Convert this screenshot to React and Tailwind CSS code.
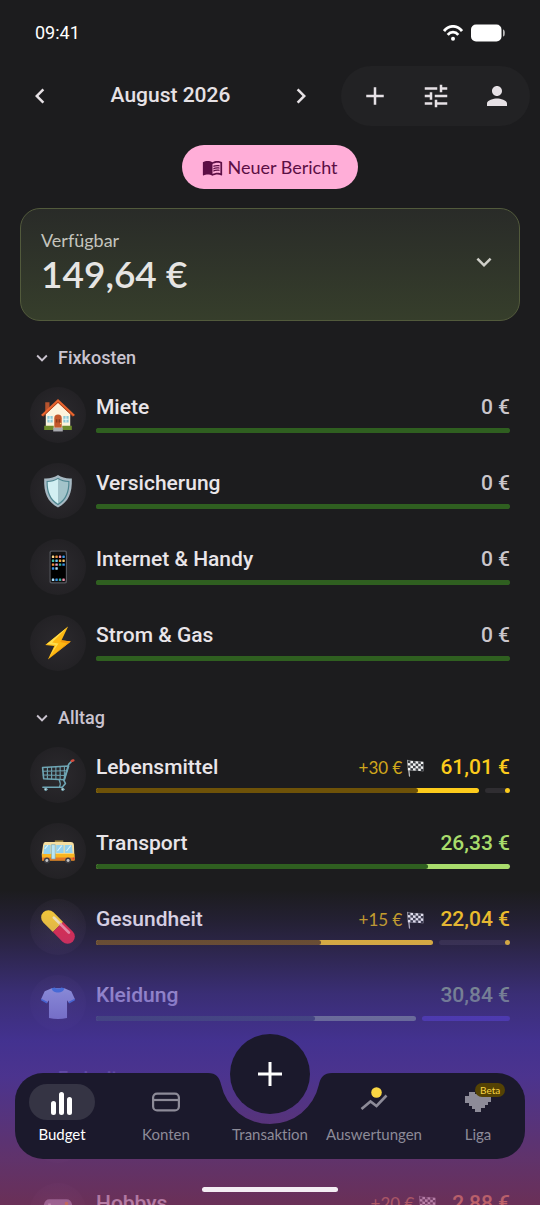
import React, { useState } from "react";
import {
  MdAdd,
  MdChevronLeft,
  MdChevronRight,
  MdExpandMore,
  MdMenuBook,
  MdPerson,
  MdTune,
} from "react-icons/md";

const groups = [
  {
    name: "Fixkosten",
    items: [
      { id: "miete", name: "Miete", icon: "house", amount: "0 €", tone: "empty", filled: 100, spent: 100 },
      { id: "versicherung", name: "Versicherung", icon: "shield", amount: "0 €", tone: "empty", filled: 100, spent: 100 },
      { id: "internet", name: "Internet & Handy", icon: "phone", amount: "0 €", tone: "empty", filled: 100, spent: 100 },
      { id: "strom", name: "Strom & Gas", icon: "bolt", amount: "0 €", tone: "empty", filled: 100, spent: 100 },
    ],
  },
  {
    name: "Alltag",
    items: [
      { id: "lebensmittel", name: "Lebensmittel", icon: "cart", amount: "61,01 €", goal: "+30 €", tone: "yellow", filled: 92.5, spent: 77.8 },
      { id: "transport", name: "Transport", icon: "bus", amount: "26,33 €", tone: "green", filled: 100, spent: 80.3 },
      { id: "gesundheit", name: "Gesundheit", icon: "pill", amount: "22,04 €", goal: "+15 €", tone: "yellow", filled: 81.5, spent: 54.3 },
      { id: "kleidung", name: "Kleidung", icon: "shirt", amount: "30,84 €", tone: "saving", filled: 77.4, spent: 53 },
    ],
  },
  {
    name: "Freizeit",
    items: [
      { id: "leer", name: "", amount: "", tone: "empty", filled: 100, spent: 100 },
      { id: "hobbys", name: "Hobbys", icon: "gamepad", amount: "2,88 €", goal: "+20 €", tone: "orange", filled: 60, spent: 50 },
    ],
  },
];

const tones = {
  empty: { text: "text-[#cac6cb]", spent: "bg-[#2f5f20]", left: "bg-[#2f5f20]", rest: "bg-[#2f2d31]" },
  green: { text: "text-[#a9dc6c]", spent: "bg-[#2f5f20]", left: "bg-[#a9dc6c]", rest: "bg-[#2f2d31]" },
  saving: { text: "text-[#a9dc6c]", spent: "bg-[#2f5f20]", left: "bg-[#a9dc6c]", rest: "bg-[#4b3eaf]" },
  yellow: { text: "text-[#fccb1c]", spent: "bg-[#6e5208]", left: "bg-[#fccb1c]", rest: "bg-[#2f2d31]", dot: true },
  orange: { text: "text-[#fca04c]", spent: "bg-[#6e3a08]", left: "bg-[#fca04c]", rest: "bg-[#2f2d31]", dot: true },
};

const emojis = {
  house: (
    <>
      <path d="M4 4h4v9H4z" fill="#b5532e" />
      <path d="M4.500 15 16 4l11.500 11v14h-23z" fill="#fdf3dc" />
      <path d="M16 1 0 16l2 1.500L16 4.500l14 13 2-1.500z" fill="#e9652f" />
      <path d="m16 4.500-14 13v-.8L16 3.500l14 13.200v.8z" fill="#a63e17" />
      <path d="M6 17h5v6H6zM21 17h5v6h-5z" fill="#8fc9d4" />
      <path d="M8.500 17v6M6 20h5M23.500 17v6M21 20h5" stroke="#f3fbfb" strokeWidth="0.8" />
      <path d="M12.500 28V19a3.500 3.500 0 0 1 7 0v9z" fill="#c4572b" />
      <path d="M14 20h1.500v3H14zM16.500 20H18v3h-1.500z" fill="#8c3a1c" />
      <circle cx="18.500" cy="24" r="0.7" fill="#ffd35c" />
      <path d="M3 26h9v4H3zM20 26h9v4h-9z" fill="#6d8b2c" />
      <path d="M11.500 28h9v3.500h-9z" fill="#a9aab0" />
    </>
  ),
  shield: (
    <>
      <path d="M16 1c3.500 2.500 8 3.500 13 3.200C29.500 18 26 26 16 31.500 6 26 2.500 18 3 4.200 8 4.500 12.500 3.500 16 1z" fill="#a7b9c3" />
      <path d="M16 3.500c3 2 6.800 3 10.800 3C27 17.500 24 24.500 16 29.300 8 24.500 5 17.500 5.200 6.500c4 0 7.800-1 10.800-3z" fill="#4f8791" />
      <path d="M16 4.800c3 1.900 6 2.700 9.700 2.800C25.700 17 23 23.600 16 28z" fill="#a3c4ca" />
      <path d="M16 4.800c-3 1.900-6 2.700-9.700 2.800C6.300 17 9 23.600 16 28z" fill="#d2eff2" />
    </>
  ),
  phone: (
    <>
      <rect x="8" y="0.500" width="16.500" height="31" rx="1.800" fill="#54565c" />
      <rect x="9.200" y="1.700" width="14" height="28.600" rx="1" fill="#111" />
      <path d="M9.200 4.500h14v23.500h-14z" fill="#000" />
      {[
        ["#f7d58a", "#ee9440", "#ef8cab", "#3d9ae8"],
        ["#43bba5", "#6cc6f2", "#f2a33c", "#f7c873"],
        ["#f2933c", "#f09fc0", "#36b39a", "#3993e8"],
        ["#3993e8", "#a7dcf7"],
      ].map((row, y) =>
        row.map((color, x) => (
          <rect key={`${y}-${x}`} x={10.200 + x * 3.300} y={5.200 + y * 3.700} width="2.300" height="2.300" rx="0.400" fill={color} />
        ))
      )}
      {["#a7dcf7", "#3993e8", "#36b39a", "#ef8cab"].map((color, x) => (
        <rect key={color} x={10.200 + x * 3.300} y="26.800" width="2.300" height="2.300" rx="0.400" fill={color} />
      ))}
    </>
  ),
  bolt: (
    <>
      <path d="M25.500.5 4 17.800l8.500 1L6.500 31.500 28 14.500l-8.700-1.200z" fill="#fdb813" />
      <path d="M25.500.5 5.500 16.900l8.300.9L8 29l8.500-12.500-6-1z" fill="#fede4b" />
      <path d="m28 14.500-8.700-1.200L18 15l6.500 1.200L6.500 31.500z" fill="#f59b0c" />
    </>
  ),
  cart: (
    <g fill="none" stroke="#6fa6b5" strokeLinejoin="round" strokeLinecap="round">
      <path d="M1.500 9 26 7.500l-4 13-19.500-1z" strokeWidth="1.500" />
      <path d="M29.500 2.500 26 6l-4.500 15 1.500 3-3 3.500H1.800" strokeWidth="1.500" />
      <path d="M6 9v10.500M10 8.700v11M14 8.500v11.400M18 8.200v11.900M22 8v12M2 12.500l22.500-.5M2 16l21.200.5" strokeWidth="1" />
      <path d="M17 20.500c1 2 2 3.500.5 6.500" strokeWidth="1.200" />
      <circle cx="4.500" cy="29.500" r="1.200" fill="#d2d6d8" strokeWidth="0.800" />
      <circle cx="20.500" cy="29.500" r="1.200" fill="#d2d6d8" strokeWidth="0.800" />
      <path d="m29 2.800 1.500-.5" stroke="#d84b3c" strokeWidth="2.200" />
    </g>
  ),
  bus: (
    <>
      <path d="M13 6h8v2h-8z" fill="#9c8544" />
      <path d="M4 7.500h24q2.800 0 3 3L31.500 24H1l-.3-5L2 10q.3-2.500 2-2.500z" fill="#f5dfa1" />
      <path d="M1 18.500h30.500V25H1z" fill="#f9b620" />
      <path d="M1 22h30.500v3H1z" fill="#e1792a" />
      <path d="M3.300 10.300H9v8.500H2.300zM14.300 10.300h7v7.500h-7zM22.300 10.300H29l.8 7.500h-7.500z" fill="#93d1ee" />
      <path d="M9.800 10h3.600v13.500H9.800z" fill="#b9e5f5" stroke="#6b9fae" strokeWidth="0.500" />
      <path d="m3.500 14 3-3.500M15.500 16l4-5M24 16l4-5" stroke="#ddf4fc" />
      <circle cx="5.500" cy="25" r="2.800" fill="#3d3d42" />
      <circle cx="5.500" cy="25" r="1.400" fill="#c6c7ca" />
      <circle cx="25.500" cy="25" r="2.800" fill="#3d3d42" />
      <circle cx="25.500" cy="25" r="1.400" fill="#c6c7ca" />
      <circle cx="30.700" cy="23" r="1" fill="#e23d36" />
    </>
  ),
  pill: (
    <g transform="rotate(45 16 16)">
      <path d="M16 9.200H3.200a6.800 6.800 0 0 0 0 13.600H16z" fill="#ffd22e" />
      <path d="M16 9.200h12.800a6.800 6.800 0 0 1 0 13.600H16z" fill="#ec2b40" />
      <path d="M7 12.500h9" stroke="#fff3b8" strokeWidth="2.600" strokeLinecap="round" />
      <path d="M16 12.500h11" stroke="#ff97a2" strokeWidth="2.600" strokeLinecap="round" />
    </g>
  ),
  shirt: (
    <>
      <path d="M10 2 3.500 5 0 12.500l6 3 1.500-2V30q8.500 2 17 0V13.500l1.500 2 6-3L28.500 5 22 2z" fill="#cde8ff" />
      <path d="M10 2c1 5.500 11 5.500 12 0l-3-.7c-1 1.500-5 1.500-6 0z" fill="#3aa5ff" />
      <path d="m.3 12 6 3-.8 1.500-5.500-3zM31.700 12l-6 3 .8 1.500 5.500-3z" fill="#3aa5ff" />
    </>
  ),
  gamepad: (
    <>
      <path d="M8 5h16q4.500 0 5.500 6l2.200 11q.3 6-4 6-2.500 0-6.200-6h-11Q7 28 4.300 28 0 28 .3 22L2.500 11Q3.500 5 8 5z" fill="#a5a0b4" />
      <path d="M8 9v7M4.500 12.500h7" stroke="#f4f4fa" strokeWidth="2.500" />
      <circle cx="24" cy="9" r="1.700" fill="#ffb02e" />
      <circle cx="21" cy="12.500" r="1.700" fill="#3b7ef0" />
      <circle cx="27" cy="12.500" r="1.700" fill="#f04444" />
      <circle cx="24" cy="16" r="1.700" fill="#40b46a" />
    </>
  ),
};

const Emoji = ({ name }) => (
  <svg viewBox="0 0 32 32" className="w-[34px] h-[34px]" aria-hidden="true">
    {emojis[name]}
  </svg>
);

const flagSquares = [0, 1, 2, 3].flatMap((y) => [0, 1, 2, 3, 4, 5].map((x) => [x, y]));

const FlagIcon = () => (
  <svg viewBox="0 0 18 18" className="w-[18px] h-[18px]" aria-hidden="true">
    <path d="M1.800 1.500 3.500 17" stroke="#b9bcc0" strokeWidth="1.300" strokeLinecap="round" />
    <g transform="translate(1.800 1.600) skewY(4)">
      <rect width="15.600" height="9.600" fill="#f1f2f3" />
      {flagSquares.map(([x, y]) =>
        (x + y) % 2 === 0 ? (
          <rect key={`${x}-${y}`} x={x * 2.600} y={y * 2.400} width="2.600" height="2.400" fill="#3c3f44" />
        ) : null
      )}
    </g>
  </svg>
);

const StatusBar = () => (
  <div className="h-[66px] px-[35px] flex items-center justify-between text-white">
    <span className="text-lg">09:41</span>
    <div className="flex items-center gap-2">
      <svg viewBox="0 0 20 16" className="w-5 h-4" fill="none" stroke="currentColor" strokeWidth="2.800">
        <path d="M1 6C6-.2 14-.2 19 6" />
        <path d="M4.700 9.800c3-3.500 7.600-3.500 10.600 0" />
        <circle cx="10" cy="13.800" r="2" fill="currentColor" stroke="none" />
      </svg>
      <svg viewBox="0 0 34 18" className="w-[34px] h-[18px]" fill="currentColor">
        <rect x="0" y="0.500" width="30.500" height="17" rx="5" />
        <path d="M32 5.500q1.800 0 1.800 3.500T32 12.500z" opacity="0.700" />
      </svg>
    </div>
  </div>
);

const Header = () => (
  <header className="px-2.5 flex items-center gap-2.5 text-[#e6e1e5]">
    <div className="flex-1 flex items-center justify-between">
      <button type="button" aria-label="Voriger Monat" className="w-[60px] h-[60px] flex items-center justify-center">
        <MdChevronLeft size={30} />
      </button>
      <h1 className="text-[21px] font-medium">August 2026</h1>
      <button type="button" aria-label="Nächster Monat" className="w-[60px] h-[60px] flex items-center justify-center">
        <MdChevronRight size={30} />
      </button>
    </div>
    <div className="flex items-center rounded-[30px] bg-[#222224] px-[3px]">
      <button type="button" aria-label="Hinzufügen" className="w-[61px] h-[60px] flex items-center justify-center">
        <MdAdd size={30} />
      </button>
      <button type="button" aria-label="Einstellungen" className="w-[61px] h-[60px] flex items-center justify-center">
        <MdTune size={30} />
      </button>
      <button type="button" aria-label="Profil" className="w-[61px] h-[60px] flex items-center justify-center">
        <MdPerson size={30} />
      </button>
    </div>
  </header>
);

const ProgressBar = ({ item }) => {
  const tone = tones[item.tone];
  return (
    <div className="flex gap-1.5 h-[5px]">
      <div
        className={`h-full rounded-full overflow-hidden ${tone.left}`}
        style={{ width: `${item.filled}%` }}
      >
        <div
          className={`h-full rounded-r-full ${tone.spent}`}
          style={{ width: `${(item.spent / item.filled) * 100}%` }}
        />
      </div>
      {item.filled < 100 && (
        <div className={`flex-1 h-full rounded-full flex justify-end ${tone.rest}`}>
          {tone.dot && <span className={`w-[5px] h-[5px] rounded-full ${tone.left}`} />}
        </div>
      )}
    </div>
  );
};

const BudgetRow = ({ item }) => {
  const tone = tones[item.tone];
  return (
    <li className="h-[76px] px-[30px] flex items-center gap-2.5">
      <div className="w-14 h-14 shrink-0 rounded-full bg-[radial-gradient(circle,#2c2a2e,#1f1e21)] flex items-center justify-center">
        {item.icon && <Emoji name={item.icon} />}
      </div>
      <div className="flex-1 min-w-0 flex flex-col gap-1.5 pb-[3px]">
        <div className="h-7 flex items-center text-[21px] font-medium">
          <span className="flex-1 truncate text-[#e9e5e9]">{item.name}</span>
          {item.goal && (
            <span className="flex items-center gap-1 mr-4">
              <span className={`font-[Lato,sans-serif] font-normal text-[17px] ${tone.text} opacity-80`}>{item.goal}</span>
              <FlagIcon />
            </span>
          )}
          <span className={tone.text}>{item.amount}</span>
        </div>
        <ProgressBar item={item} />
      </div>
    </li>
  );
};

const BudgetGroup = ({ group }) => {
  const [open, setOpen] = useState(true);
  return (
    <section>
      <h2 className="pt-[18px]">
        <button
          type="button"
          onClick={() => setOpen(!open)}
          aria-expanded={open}
          className="h-[38px] px-[31px] flex items-center gap-[5px] text-lg font-medium text-[#cac4d0]"
        >
          <MdExpandMore size={22} />
          {group.name}
        </button>
      </h2>
      {open && (
        <ul>
          {group.items.map((item) => (
            <BudgetRow key={item.id} item={item} />
          ))}
        </ul>
      )}
    </section>
  );
};

const BudgetIcon = () => (
  <svg viewBox="0 0 24 24" className="w-6 h-6 overflow-visible" stroke="currentColor" strokeWidth="5" strokeLinecap="round">
    <path d="M3.500 13.500v9M11.500 4.500v18M19.500 9.500v13" />
  </svg>
);

const AccountsIcon = () => (
  <svg viewBox="0 0 30 24" className="w-[30px] h-6" fill="none" stroke="currentColor" strokeWidth="2.200">
    <rect x="2.100" y="3.600" width="25.800" height="16.800" rx="4" />
    <path d="M2 10h26" />
  </svg>
);

const ReportsIcon = () => (
  <svg viewBox="0 0 30 30" className="w-[30px] h-[30px]" fill="none">
    <path d="m2.500 22 9-7.500 6 4.500L27.500 8.500" stroke="currentColor" strokeWidth="2.600" />
    <circle cx="17.500" cy="5.500" r="5.300" fill="#fad643" />
  </svg>
);

const LeagueIcon = () => (
  <svg viewBox="0 0 26 20" className="w-[26px] h-5" fill="currentColor" shapeRendering="crispEdges">
    <path d="M4 0h6v2h6V0h6v4h4v6h-3v3h-3v3h-4v4h-6v-3H7v-3H4v-3H0V4h4z" />
  </svg>
);

const NavItem = ({ label, active, onClick, children }) => (
  <button
    type="button"
    onClick={onClick}
    className={`flex flex-col items-center gap-1 pt-[11px] ${active ? "text-white" : "text-[#8d8b98]"}`}
  >
    <span className={`relative w-[66px] h-9 rounded-full flex items-center justify-center ${active ? "bg-[#353444]" : ""}`}>
      {children}
    </span>
    <span className="text-[15px] leading-5 [font-variant-ligatures:none]">{label}</span>
  </button>
);

const BottomNav = () => {
  const [active, setActive] = useState("Budget");
  return (
    <nav className="absolute inset-x-0 bottom-0 px-2.5 font-[Lato,sans-serif]">
      <div className="relative h-[86px]">
        {/* bar with the notch for the add button */}
        <div className="absolute inset-0 px-[5px] flex text-[#1b192c]">
          <div className="flex-1 rounded-l-[28px] bg-current" />
          <svg viewBox="0 0 128 86" className="w-32 h-[86px]" fill="currentColor">
            <path d="M0 0h2c8 0 11.500 4 13.200 12a50 50 0 0 0 97.600 0C114.500 4 118 0 126 0h2v86H0z" />
          </svg>
          <div className="flex-1 rounded-r-[28px] bg-current" />
        </div>
        <div className="relative h-full grid grid-cols-5 items-start">
          <NavItem label="Budget" active={active === "Budget"} onClick={() => setActive("Budget")}>
            <BudgetIcon />
          </NavItem>
          <NavItem label="Konten" active={active === "Konten"} onClick={() => setActive("Konten")}>
            <AccountsIcon />
          </NavItem>
          <NavItem label="Transaktion">
            <span className="absolute bottom-1.5 left-1/2 -translate-x-1/2 w-20 h-20 rounded-full bg-[#1b192c] text-white flex items-center justify-center">
              <svg viewBox="0 0 24 24" className="w-6 h-6" stroke="currentColor" strokeWidth="3">
                <path d="M12 0v24M0 12h24" />
              </svg>
            </span>
          </NavItem>
          <NavItem label="Auswertungen" active={active === "Auswertungen"} onClick={() => setActive("Auswertungen")}>
            <ReportsIcon />
          </NavItem>
          <NavItem label="Liga" active={active === "Liga"} onClick={() => setActive("Liga")}>
            <LeagueIcon />
            <span className="absolute -top-px left-[30px] h-3.5 px-[5px] rounded-full bg-[#544204] text-[#fad643] text-[10px] leading-3.5">
              Beta
            </span>
          </NavItem>
        </div>
      </div>
      <div className="h-[46px] pt-7 flex justify-center">
        <div className="w-[136px] h-[5px] rounded-full bg-[#f3eef3]" />
      </div>
    </nav>
  );
};

const App = () => {
  return (
    <div className="relative h-screen overflow-hidden bg-[#1c1c1e] font-[Roboto,sans-serif]">
      <StatusBar />
      <Header />

      <main>
        <div className="mt-[19px] flex justify-center">
          <button
            type="button"
            className="h-11 px-5 rounded-full bg-[#ffaed8] text-[#5c0f45] font-[Lato,sans-serif] text-lg flex items-center gap-1"
          >
            <MdMenuBook size={21} />
            Neuer Bericht
          </button>
        </div>

        {/* Available balance */}
        <button
          type="button"
          className="mt-[19px] mx-5 w-[calc(100%-40px)] px-5 pt-[19px] pb-6 rounded-[20px] border border-[#525a3c] bg-linear-to-b from-[#292b28] to-[#363e2b] flex items-center justify-between text-left font-[Lato,sans-serif]"
        >
          <span>
            <span className="block text-lg leading-6 text-[#c4c4bd]">Verfügbar</span>
            <span className="block text-[37px] leading-11 font-semibold text-[#e6e5e3]">149,64 €</span>
          </span>
          <MdExpandMore size={30} className="text-[#cfcfc9]" />
        </button>

        {groups.map((group) => (
          <BudgetGroup key={group.name} group={group} />
        ))}
      </main>

      {/* Glow behind the navigation */}
      <div className="pointer-events-none absolute inset-x-0 bottom-0 h-[315px] bg-[linear-gradient(to_bottom,rgba(80,60,190,0)_0%,rgba(86,60,190,0.12)_9%,rgba(88,62,190,0.25)_17%,rgba(80,59,180,0.58)_33%,rgba(77,55,172,0.8)_48%,rgba(82,55,158,0.88)_59%,rgba(118,58,130,0.76)_86%,rgba(154,60,122,0.62)_100%)]" />

      <BottomNav />
    </div>
  );
};

export default App;
